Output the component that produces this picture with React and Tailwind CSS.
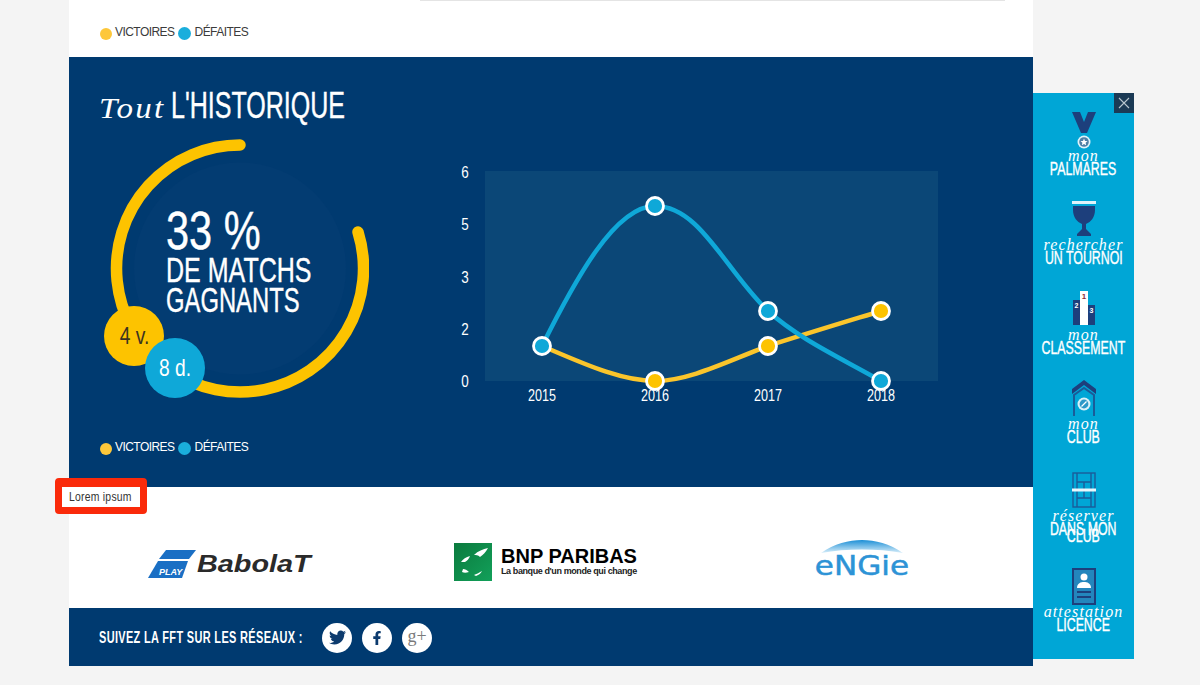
import React from "react";
import { FaTwitter, FaFacebookF } from "react-icons/fa";

const COND = "font-['Liberation_Sans',sans-serif] whitespace-nowrap";
const SCRIPT = "font-['Liberation_Serif',serif] italic whitespace-nowrap";
const HEAVY = "[-webkit-text-stroke:0.4px_white]";

function Legend({ dark }) {
  return (
    <div className={`flex items-center text-[12px] font-['Liberation_Sans',sans-serif] tracking-[-0.55px] ${dark ? "text-white" : "text-[#3b3b3b]"}`}>
      <span className="w-3 h-3 rounded-full bg-[#fdc73a] mt-[3px] mr-[3px] ml-[1px]" />
      <span>VICTOIRES</span>
      <span className="w-[13px] h-[13px] rounded-full bg-[#1aaedc] mt-[3px] ml-[3px] mr-[4px]" />
      <span>DÉFAITES</span>
    </div>
  );
}

function Donut() {
  return (
    <div className="relative w-[264px] h-[259px]">
      <svg className="absolute left-0 top-0" width="264" height="259" viewBox="105 139 264 259">
        <circle cx="240" cy="268.5" r="106" fill="#033c72" />
        <path d="M240 145 A123.5 123.5 0 1 0 358 232" fill="none" stroke="#fdc300" strokeWidth="11.5" strokeLinecap="round" />
      </svg>
      <div className={`relative pl-[61px] pt-[67px] text-white ${COND} ${HEAVY}`}>
        <div className="text-[54px] leading-[49px] scale-x-[0.77] origin-left">33 %</div>
        <div className="text-[35px] leading-[30px] scale-x-[0.715] origin-left">DE MATCHS</div>
        <div className="text-[35px] leading-[30px] scale-x-[0.68] origin-left">GAGNANTS</div>
      </div>
      <div className={`absolute left-[-1px] top-[167px] w-[60px] h-[60px] rounded-full bg-[#fdc300] flex items-center justify-center text-[#3c3320] ${COND}`}>
        <span className="text-[24px] scale-x-[0.8]">4 v.</span>
      </div>
      <div className={`absolute left-[40px] top-[199px] w-[60px] h-[60px] rounded-full bg-[#0fa8d8] flex items-center justify-center text-white ${COND}`}>
        <span className="text-[24px] scale-x-[0.8]">8 d.</span>
      </div>
    </div>
  );
}

function Chart() {
  const lbl = { fill: "#fff", fontFamily: "'Liberation Sans',sans-serif", fontSize: 17, textAnchor: "middle", lengthAdjust: "spacingAndGlyphs" };
  const Dot = ({ x, y, c }) => <circle cx={x} cy={y} r="8.5" fill={c} stroke="#fff" strokeWidth="2.8" />;
  return (
    <svg width="490" height="250" viewBox="455 160 490 250">
      <rect x="485" y="171" width="453" height="210" fill="#0b4777" />
      {[[6, 178], [5, 230], [3, 283], [2, 335], [0, 387]].map(([t, y]) => (
        <text key={t} x="465" y={y} textLength="7.5" {...lbl}>{t}</text>
      ))}
      <path d="M542 346 C580 362 620 381 655 381 C690 381 730 360 768 346 C805 334 845 322 881 311" fill="none" stroke="#fbc52b" strokeWidth="4.5" />
      <path d="M542 346 C575 280 615 206 655 206 C700 206 725 270 768 311 C800 340 845 360 881 381" fill="none" stroke="#0fa8d8" strokeWidth="4.5" />
      {[[2015, 542], [2016, 655], [2017, 768], [2018, 881]].map(([t, x]) => (
        <text key={t} x={x} y="401" textLength="28" {...lbl}>{t}</text>
      ))}
      <Dot x={655} y={381} c="#fdc300" />
      <Dot x={768} y={346} c="#fdc300" />
      <Dot x={881} y={311} c="#fdc300" />
      <Dot x={542} y={346} c="#0fa8d8" />
      <Dot x={655} y={206} c="#0fa8d8" />
      <Dot x={768} y={311} c="#0fa8d8" />
      <Dot x={881} y={381} c="#0fa8d8" />
    </svg>
  );
}

const NAVY = "#1d3f7c";
const Medal = () => (
  <svg width="24" height="38" viewBox="0 0 24 38">
    <path d="M0 0H8L12 10L16 0H24L15 21H9Z" fill={NAVY} />
    <circle cx="12" cy="30" r="6.5" fill="#dff3fa" />
    <circle cx="12" cy="30" r="4.8" fill="#4f7fa6" />
    <path d="M12 26.5l1 2.4 2.5.2-1.9 1.6.6 2.5-2.2-1.3-2.2 1.3.6-2.5-1.9-1.6 2.5-.2z" fill="#fff" />
  </svg>
);
const Cup = () => (
  <svg width="24" height="36" viewBox="0 0 24 36">
    <rect x="0" y="0" width="24" height="3" fill="#dff3fa" />
    <path d="M1 5H23V9C23 16 19 21 14 23V28L19 33V35H5V33L10 28V23C5 21 1 16 1 9Z" fill={NAVY} />
  </svg>
);
const Podium = () => (
  <svg width="22" height="34" viewBox="0 0 22 34">
    <rect x="0" y="9" width="7" height="25" fill={NAVY} />
    <rect x="7" y="0" width="8" height="34" fill="#fff" />
    <rect x="15" y="14" width="7" height="20" fill={NAVY} />
    <text x="3.5" y="17" fill="#fff" fontSize="7" fontWeight="700" textAnchor="middle" fontFamily="'Liberation Sans',sans-serif">2</text>
    <text x="11" y="8" fill="#8a2d3a" fontSize="8" fontWeight="700" textAnchor="middle" fontFamily="'Liberation Sans',sans-serif">1</text>
    <text x="18.5" y="22" fill="#fff" fontSize="7" fontWeight="700" textAnchor="middle" fontFamily="'Liberation Sans',sans-serif">3</text>
  </svg>
);
const Club = () => (
  <svg width="24" height="37" viewBox="0 0 24 37">
    <path d="M0 9L12 0L24 9V14L12 5L0 14Z" fill={NAVY} />
    <path d="M2 36V15L12 8L22 15V36" fill="none" stroke="#1a5c99" strokeWidth="2" />
    <circle cx="12" cy="24" r="6.5" fill="#d8f0f8" />
    <circle cx="12" cy="24" r="4.4" fill="#2b98c8" />
    <path d="M9.5 26.5L14.5 21.5" stroke="#fff" strokeWidth="1.2" />
  </svg>
);
const Court = () => (
  <svg width="24" height="36" viewBox="0 0 24 36">
    <g fill="none" stroke="#1a5c99" strokeWidth="1.4">
      <rect x="1" y="1" width="22" height="34" />
      <path d="M5 1V35M19 1V35M5 10H19M5 26H19M12 10V26" />
    </g>
    <rect x="0" y="16.5" width="24" height="3" fill="#eaf7fc" />
  </svg>
);
const Licence = () => (
  <svg width="24" height="37" viewBox="0 0 24 37">
    <rect x="1" y="1" width="22" height="35" fill="#2386bd" stroke={NAVY} strokeWidth="2" />
    <circle cx="12" cy="9" r="3.5" fill="#fff" />
    <path d="M5 20C5 15 9 14 12 14C15 14 19 15 19 20Z" fill="#fff" />
    <path d="M5 24H19M5 29H19" stroke={NAVY} strokeWidth="2" />
  </svg>
);

function Item({ icon, script, lines, h }) {
  return (
    <div className={`flex flex-col items-center text-white ${h}`}>
      <div className="h-[38px] flex items-start justify-center">{icon}</div>
      <div className={`${SCRIPT} text-[16px] leading-[12px] tracking-[1.1px]`}>{script}</div>
      {lines.map((l, i) => (
        <div key={l} className={`${COND} ${HEAVY} text-[19px] scale-x-[0.65] ${i ? "leading-[8px] mt-[-4px]" : "leading-[14px]"}`}>{l}</div>
      ))}
    </div>
  );
}

function Sidebar() {
  return (
    <div className="absolute left-[1033px] top-[93px] w-[101px] h-[566px] bg-[#00a6d6] pt-[19px]">
      <button className="absolute right-0 top-0 w-5 h-5 bg-[#1b3a55] flex items-center justify-center">
        <svg width="12" height="12" viewBox="0 0 12 12"><path d="M1 1L11 11M11 1L1 11" stroke="#b9c6cf" strokeWidth="1.1" /></svg>
      </button>
      <Item h="h-[89px]" icon={<Medal />} script="mon" lines={["PALMARES"]} />
      <Item h="h-[90px]" icon={<Cup />} script="rechercher" lines={["UN TOURNOI"]} />
      <Item h="h-[89px]" icon={<Podium />} script="mon" lines={["CLASSEMENT"]} />
      <Item h="h-[92px]" icon={<Club />} script="mon" lines={["CLUB"]} />
      <Item h="h-[96px]" icon={<Court />} script="réserver" lines={["DANS MON", "CLUB"]} />
      <Item h="h-[89px]" icon={<Licence />} script="attestation" lines={["LICENCE"]} />
    </div>
  );
}

function Logos() {
  return (
    <div className="h-[121px] bg-white flex items-start">
      <div className="ml-[79px] mt-[63px] flex items-center w-[165px] h-[28px]">
        <svg width="48" height="28" viewBox="0 0 48 28" className="shrink-0">
          <path d="M18 0H48L41 9H11Z" fill="#1a6fc4" />
          <path d="M10 11H40L34 28H0Z" fill="#1a6fc4" />
          <text x="11" y="25" fill="#fff" fontSize="9" fontStyle="italic" fontWeight="700" fontFamily="'Liberation Sans',sans-serif">PLAY</text>
        </svg>
        <span className="font-['Liberation_Sans',sans-serif] italic font-bold text-[24px] text-[#2a2a2a] ml-[1px] leading-none scale-x-[1.2] origin-left">BabolaT</span>
      </div>
      <div className="ml-[141px] mt-[56px] flex items-center w-[183px] h-[38px]">
        <svg width="38" height="38" viewBox="0 0 38 38" className="shrink-0">
          <defs>
            <linearGradient id="bnp" x1="0" y1="0" x2="1" y2="1">
              <stop offset="0" stopColor="#0b7a3e" />
              <stop offset="1" stopColor="#12a05a" />
            </linearGradient>
          </defs>
          <rect width="38" height="38" fill="url(#bnp)" />
          <path d="M20 12C24 8 29 6 34 5C32 9 29 12 26 14C24 12 22 12 20 12ZM7 19C9 16 12 14 16 13C15 16 13 18 11 19C9 19 8 19 7 19ZM9 26C11 26 13 27 15 29C12 30 10 30 8 29ZM20 32C22 31 25 30 28 28C27 30 25 32 22 33Z" fill="#fff" />
        </svg>
        <div className="ml-[9px] font-['Liberation_Sans',sans-serif] text-black">
          <div className="font-bold text-[20px] leading-[19px] whitespace-nowrap">BNP PARIBAS</div>
          <div className="text-[9px] leading-[11px] font-bold tracking-[-0.4px] whitespace-nowrap text-[#222]">La banque d'un monde qui change</div>
        </div>
      </div>
      <div className="ml-[178px] mt-[53px] w-[93px] h-[38px] flex flex-col items-center">
        <svg width="84" height="13" viewBox="0 0 88 14">
          <defs>
            <linearGradient id="eng" x1="0" y1="0" x2="0" y2="1">
              <stop offset="0" stopColor="#1c8fd6" />
              <stop offset="1" stopColor="#d8eefa" />
            </linearGradient>
          </defs>
          <path d="M0 14C14 4 30 0 44 0C58 0 74 4 88 14C60 9 28 9 0 14Z" fill="url(#eng)" />
        </svg>
        <span className="font-['DejaVu_Sans',sans-serif] text-[27px] leading-[24px] text-[#2d93d6] mt-[1px] scale-x-[1.15] [-webkit-text-stroke:0.5px_#2d93d6]">eNGie</span>
      </div>
    </div>
  );
}

function Footer() {
  return (
    <div className="h-[58px] bg-[#003a70] flex items-center pl-[30px] pt-[1px]">
      <span className="w-[203px]">
        <span className={`${COND} block font-bold text-white text-[16px] tracking-[0.5px] scale-x-[0.685] origin-left`}>SUIVEZ LA FFT SUR LES RÉSEAUX :</span>
      </span>
      <div className="flex gap-[10px] ml-[20px]">
        <span className="w-[30px] h-[30px] rounded-full bg-white flex items-center justify-center text-[#0d3b6e]"><FaTwitter size={17} /></span>
        <span className="w-[30px] h-[30px] rounded-full bg-white flex items-center justify-center text-[#0d3b6e]"><FaFacebookF size={14} /></span>
        <span className="w-[30px] h-[30px] rounded-full bg-white flex items-center justify-center text-[#7a7a7a] font-['Liberation_Serif',serif] text-[18px] leading-none pb-[3px]">g+</span>
      </div>
    </div>
  );
}

export default function App() {
  return (
    <div className="relative h-[685px] w-[1200px] overflow-hidden bg-[#f4f4f4] pl-[69px]">
      <div className="w-[964px]">
        <div className="h-[57px] bg-white pl-[30px] pt-[23px] relative">
          <div className="absolute left-[351px] top-0 w-[585px] h-[1px] bg-[#e4e4e4]" />
          <Legend />
        </div>
        <div className="h-[430px] bg-[#003a70] pl-[30px] pt-[28px]">
          <div className="flex items-baseline text-white h-[41px]">
            <span className="w-[72px]">
              <span className={`${SCRIPT} block text-[30px] tracking-[2px] scale-x-[1.1] origin-left`}>Tout</span>
            </span>
            <span className={`${COND} ${HEAVY} text-[36px] leading-[41px] scale-x-[0.695] origin-left`}>L'HISTORIQUE</span>
          </div>
          <div className="flex items-start mt-[13px]">
            <div className="ml-[6px] w-[350px]"><Donut /></div>
            <div className="mt-[21px]"><Chart /></div>
          </div>
          <div className="mt-[28px]"><Legend dark /></div>
        </div>
        <Logos />
        <Footer />
      </div>
      <Sidebar />
      <div className="absolute left-[55px] top-[478px] w-[92px] h-[36px] border-x-[7px] border-t-[9px] border-b-[7px] border-[#fa2a0a] rounded-[4px] bg-white flex items-center pl-[7px] pb-[1px]">
        <span className={`${COND} text-[13px] text-[#333] scale-x-[0.8] origin-left tracking-[0.3px]`}>Lorem ipsum</span>
      </div>
    </div>
  );
}
